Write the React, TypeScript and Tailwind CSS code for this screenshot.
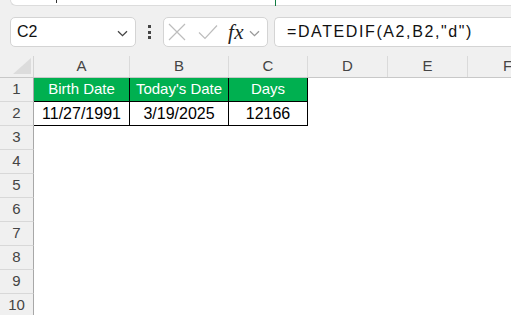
import React from "react";

const cols = [
  { l: "A", w: "w-[96px]" },
  { l: "B", w: "w-[99px]" },
  { l: "C", w: "w-[79px]" },
  { l: "D", w: "w-[80px]" },
  { l: "E", w: "w-[80px]" },
  { l: "F", w: "w-[80px]" },
];

function Chevron({ className }: { className?: string }) {
  return (
    <svg width="11" height="7" viewBox="0 0 11 7" className={className}>
      <path d="M1 1.2 L5.5 5.6 L10 1.2" fill="none" stroke="currentColor" strokeWidth="1.3" />
    </svg>
  );
}

export default function App() {
  const rows = Array.from({ length: 10 }, (_, i) => i + 1);
  return (
    <div
      className="w-[511px] h-[315px] overflow-hidden bg-[#f0f0f0] relative"
      style={{ fontFamily: '"Liberation Sans", Arial, sans-serif' }}
    >
      {/* top strip */}
      <div className="ml-[10px] h-[6px] bg-white rounded-bl-[7px] border-l border-b border-[#dcdcdc] relative">
        <div className="absolute left-[45px] top-0 w-[1px] h-[3px] bg-[#333]" />
        <div className="absolute left-[264px] top-0 w-[1px] h-[6px] bg-[#107c41]" />
      </div>

      {/* formula bar row */}
      <div className="flex mt-[11px] h-[30px] items-stretch">
        <div className="ml-[10px] w-[126px] bg-white border border-[#d4d4d4] rounded-[5px] flex items-center justify-between pl-[6px] pr-[7px]">
          <span className="text-[16px] text-[#111]">C2</span>
          <Chevron className="text-[#444] mt-[2px]" />
        </div>
        <div className="w-[27px] flex flex-col items-center justify-center gap-[2.5px]">
          <div className="w-[3px] h-[3px] bg-[#444]" />
          <div className="w-[3px] h-[3px] bg-[#444]" />
          <div className="w-[3px] h-[3px] bg-[#444]" />
        </div>
        <div className="w-[105px] bg-white border border-[#d4d4d4] rounded-[5px] flex items-center pl-[4px]">
          <svg width="18" height="18" viewBox="0 0 18 18" className="text-[#bdbdbd]">
            <path d="M1 1 L17 17 M17 1 L1 17" stroke="currentColor" strokeWidth="1.2" fill="none" />
          </svg>
          <svg width="20" height="16" viewBox="0 0 20 16" className="ml-[12px] text-[#bdbdbd]">
            <path d="M1 8.5 L7 14.5 L19 1.5" stroke="currentColor" strokeWidth="1.2" fill="none" />
          </svg>
          <span
            className="ml-[10px] text-[21px] italic text-[#222] leading-none tracking-[0.5px]"
            style={{ fontFamily: '"Liberation Serif", "Times New Roman", serif' }}
          >
            fx
          </span>
          <Chevron className="ml-[5px] text-[#9a9a9a] mt-[2px]" />
        </div>
        <div className="ml-[6px] flex-1 bg-white border border-r-0 border-[#d4d4d4] rounded-l-[5px] flex items-center pl-[12px]">
          <span className="text-[16px] tracking-[1.6px] text-[#111]">=DATEDIF(A2,B2,"d")</span>
        </div>
      </div>

      {/* sheet */}
      <div className="mt-[9px] relative">
        <div className="absolute left-[33px] top-0 w-[1px] h-[1px] bg-[#222]" />
        {/* column header */}
        <div className="flex h-[22px] border-b border-[#c8c8c8] bg-[#f0f0f0]">
          <div className="w-[34px] shrink-0 border-r border-[#d4d4d4] relative">
            <svg width="18" height="16" viewBox="0 0 18 16" className="absolute right-[2px] bottom-[3px]">
              <path d="M18 0 L18 16 L0 16 Z" fill="#dcdcdc" />
            </svg>
          </div>
          {cols.map((c) => (
            <div
              key={c.l}
              className={`${c.w} shrink-0 border-r border-[#dadada] flex items-center justify-center text-[15px] text-[#444]`}
            >
              {c.l}
            </div>
          ))}
        </div>
        {/* rows */}
        {rows.map((r) => (
          <div key={r} className="flex h-[24px]">
            <div className="w-[34px] shrink-0 border-r border-[#a8a8a8] border-b border-b-[#d8d8d8] bg-[#f0f0f0] flex items-center justify-center text-[15px] text-[#444]">
              {r}
            </div>
            {r === 1 && (
              <>
                <div className="w-[96px] shrink-0 bg-[#00b050] border-r border-b border-black flex items-center justify-center text-[15px] text-white">
                  Birth Date
                </div>
                <div className="w-[99px] shrink-0 bg-[#00b050] border-r border-b border-black flex items-center justify-center text-[15px] text-white">
                  Today's Date
                </div>
                <div className="w-[79px] shrink-0 bg-[#00b050] border-r border-b border-black flex items-center justify-center text-[15px] text-white">
                  Days
                </div>
              </>
            )}
            {r === 2 && (
              <>
                <div className="w-[96px] shrink-0 bg-white border-r border-b border-black flex items-center justify-center text-[16px] text-black">
                  11/27/1991
                </div>
                <div className="w-[99px] shrink-0 bg-white border-r border-b border-black flex items-center justify-center text-[16px] text-black">
                  3/19/2025
                </div>
                <div className="w-[79px] shrink-0 bg-white border-r border-b border-black flex items-center justify-center text-[16px] text-black">
                  12166
                </div>
              </>
            )}
            <div className="flex-1 bg-white" />
          </div>
        ))}
      </div>
    </div>
  );
}
